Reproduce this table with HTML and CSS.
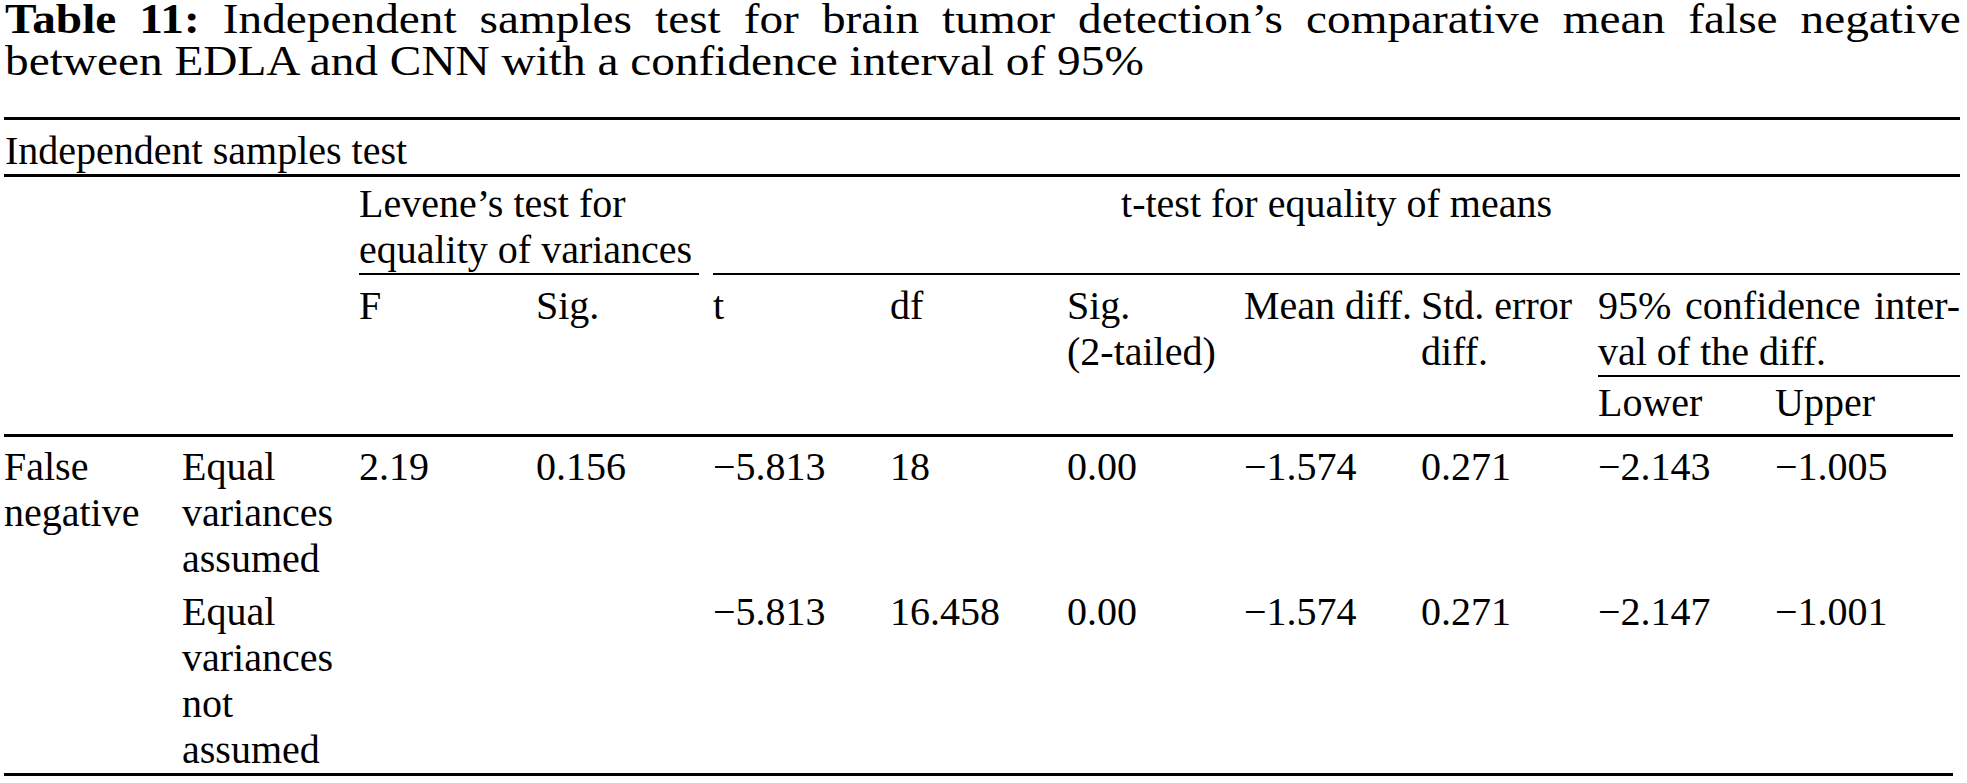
FILE: index.html
```html
<!DOCTYPE html>
<html lang="en">
<head>
<meta charset="utf-8">
<title>Table 11</title>
<link rel="stylesheet" href="styles.css">
</head>
<body>
<div class="page">
  <div class="caption">
    <p class="cap-line cap-full"><b>Table 11:</b> Independent samples test for brain tumor detection’s comparative mean false negative</p>
    <p class="cap-line">between EDLA and CNN with a confidence interval of 95%</p>
  </div>
  <table class="stats">
    <colgroup>
      <col class="c-a"><col class="c-n"><col class="c-n"><col class="c-n"><col class="c-n"><col class="c-n"><col class="c-n"><col class="c-n"><col class="c-n"><col class="c-n"><col class="c-k">
    </colgroup>
    <thead>
      <tr class="r-title">
        <th colspan="11">Independent samples test</th>
      </tr>
      <tr class="r-group">
        <th></th>
        <th></th>
        <th colspan="2" class="lev"><div class="cmid">Levene’s test for<br>equality of variances</div></th>
        <th colspan="7" class="ttest">t-test for equality of means</th>
      </tr>
      <tr class="r-head">
        <th rowspan="2"></th>
        <th rowspan="2"></th>
        <th rowspan="2">F</th>
        <th rowspan="2">Sig.</th>
        <th rowspan="2">t</th>
        <th rowspan="2">df</th>
        <th rowspan="2">Sig.<br>(2-tailed)</th>
        <th rowspan="2">Mean diff.</th>
        <th rowspan="2">Std. error<br>diff.</th>
        <th colspan="2" class="ci"><div class="jline">95% confidence inter-</div><div>val of the diff.</div></th>
      </tr>
      <tr class="r-sub">
        <th>Lower</th>
        <th>Upper</th>
      </tr>
    </thead>
    <tbody>
      <tr class="r-first">
        <td rowspan="2" class="r-label">False<br>negative</td>
        <td>Equal<br>variances<br>assumed</td>
        <td>2.19</td>
        <td>0.156</td>
        <td>−5.813</td>
        <td>18</td>
        <td>0.00</td>
        <td>−1.574</td>
        <td>0.271</td>
        <td>−2.143</td>
        <td class="end">−1.005</td>
      </tr>
      <tr class="r-last">
        <td>Equal<br>variances<br>not<br>assumed</td>
        <td></td>
        <td></td>
        <td>−5.813</td>
        <td>16.458</td>
        <td>0.00</td>
        <td>−1.574</td>
        <td>0.271</td>
        <td>−2.147</td>
        <td class="end">−1.001</td>
      </tr>
    </tbody>
  </table>
</div>
</body>
</html>
```

FILE: styles.css
```css
html, body {
  margin: 0;
  padding: 0;
  background: #ffffff;
}

body {
  color: #000000;
  font-family: "Liberation Serif", "Times New Roman", serif;
}

.page {
  width: 1956px;
  padding: 0 0 0 4px;
}

/* The caption face is set slightly wide: a 43px Times line stretched to the full measure */
.caption {
  width: 1778px;
  margin: -2px 0 35px 1px;
  font-size: 43px;
  line-height: 42px;
  transform: scaleX(1.1);
  transform-origin: 0 0;
}

.cap-line {
  margin: 0;
  white-space: nowrap;
}

.cap-full {
  text-align: justify;
  text-align-last: justify;
  white-space: normal;
}

.caption b {
  font-weight: bold;
}

.stats {
  width: 1956px;
  table-layout: fixed;
  border-collapse: separate;
  border-spacing: 0;
  font-size: 40px;
  line-height: 46px;
}

.c-a { width: 178px; }
.c-n { width: 177px; }
.c-k { width: 185px; }

.stats th,
.stats td {
  padding: 0;
  text-align: left;
  vertical-align: top;
  font-weight: normal;
  white-space: nowrap;
}

.r-title th {
  border-top: 3px solid #000;
  border-bottom: 3px solid #000;
  padding: 8px 0 0 1px;
}

.r-group th {
  padding-top: 4px;
}

.cmid {
  border-bottom: 2px solid #000;
  margin-right: 14px;
}

.r-group th.ttest {
  text-align: center;
  border-bottom: 2px solid #000;
}

.r-head th {
  padding-top: 8px;
}

.r-head th.ci {
  border-bottom: 2px solid #000;
}

.jline {
  text-align: justify;
  text-align-last: justify;
}

.r-sub th {
  padding-top: 3px;
  padding-bottom: 8px;
}

.r-first td {
  border-top: 3px solid #000;
  padding-top: 7px;
}

.r-last td {
  padding-top: 7px;
}

.stats tbody tr.r-last td,
.stats tbody td.r-label {
  border-bottom: 3px solid #000;
}

/* the lower rules stop a little short of the right edge */
.stats tbody tr.r-first td.end {
  border-top: 0;
  padding-top: 10px;
  background: linear-gradient(#000, #000) no-repeat left top / calc(100% - 7px) 3px;
}

.stats tbody tr.r-last td.end {
  border-bottom: 0;
  padding-bottom: 3px;
  background: linear-gradient(#000, #000) no-repeat left bottom / calc(100% - 7px) 3px;
}
```
